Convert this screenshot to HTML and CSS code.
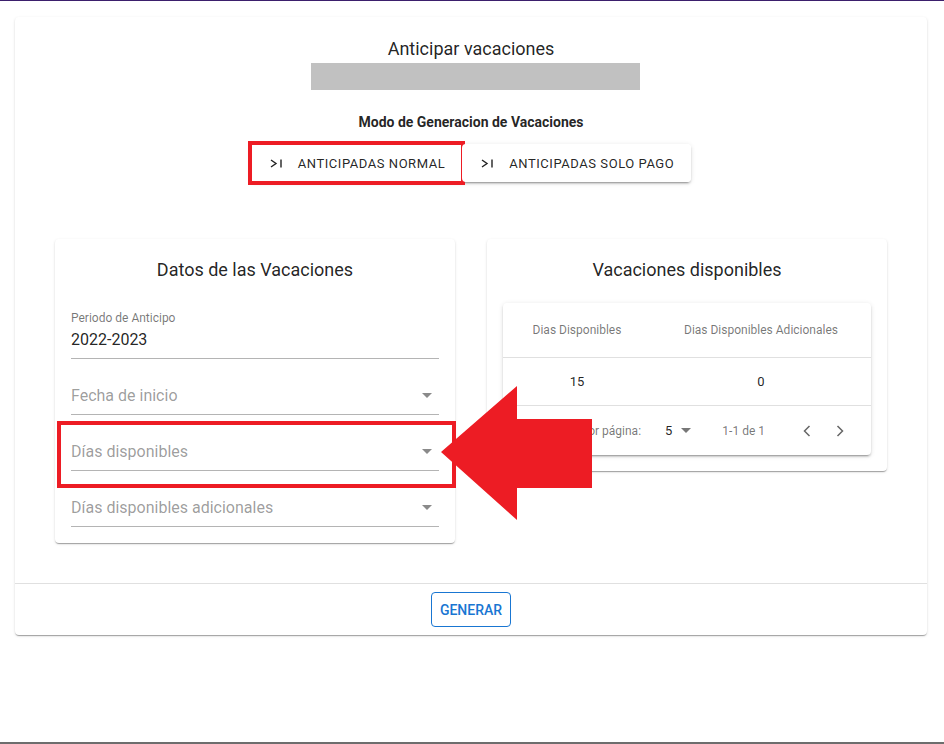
FILE: index.html
```html
<!DOCTYPE html>
<html lang="es">
  <head>
    <meta charset="UTF-8" />
    <meta name="viewport" content="width=device-width, initial-scale=1.0" />
    <title>Anticipar vacaciones</title>
    <link rel="stylesheet" href="styles.css">
  </head>
  <body>
    <div class="page">
      <div class="card">
        <h2 class="title">Anticipar vacaciones</h2>
        <div class="name-bar"></div>

        <h4 class="mode-title">Modo de Generacion de Vacaciones</h4>
        <div class="toggle-group">
          <button class="toggle marked">
            <svg class="last-icon" width="13" height="9" viewBox="0 0 13 9"><polyline points="1,1 6,4.5 1,8" fill="none" stroke="#222" stroke-width="1.4"/><line x1="11" y1="0.5" x2="11" y2="8.5" stroke="#222" stroke-width="1.4"/></svg>
            Anticipadas normal
          </button>
          <button class="toggle">
            <svg class="last-icon" width="13" height="9" viewBox="0 0 13 9"><polyline points="1,1 6,4.5 1,8" fill="none" stroke="#222" stroke-width="1.4"/><line x1="11" y1="0.5" x2="11" y2="8.5" stroke="#222" stroke-width="1.4"/></svg>
            Anticipadas solo pago
          </button>
        </div>

        <div class="panels">
          <div class="panel">
            <h3 class="panel-title">Datos de las Vacaciones</h3>
            <div class="fields">
              <div class="field">
                <div class="field-label">Periodo de Anticipo</div>
                <div class="field-input">2022-2023</div>
              </div>
              <div class="field empty">
                <div class="field-input placeholder">Fecha de inicio
                  <svg class="drop" width="10" height="5" viewBox="0 0 10 5"><path d="M0 0l5 5 5-5z" fill="#8a8a8a"/></svg>
                </div>
              </div>
              <div class="field empty">
                <div class="field-input placeholder">Días disponibles
                  <svg class="drop" width="10" height="5" viewBox="0 0 10 5"><path d="M0 0l5 5 5-5z" fill="#8a8a8a"/></svg>
                </div>
              </div>
              <div class="field empty">
                <div class="field-input placeholder">Días disponibles adicionales
                  <svg class="drop" width="10" height="5" viewBox="0 0 10 5"><path d="M0 0l5 5 5-5z" fill="#8a8a8a"/></svg>
                </div>
              </div>
            </div>
            <div class="mark-box"></div>
          </div>

          <div class="panel">
            <h3 class="panel-title">Vacaciones disponibles</h3>
            <div class="table-card">
              <div class="row head">
                <div>Dias Disponibles</div>
                <div>Dias Disponibles Adicionales</div>
              </div>
              <div class="row body">
                <div>15</div>
                <div>0</div>
              </div>
              <div class="pager">
                <span class="pager-text">Filas por página:</span>
                <span class="pager-select">5
                  <svg width="10" height="5" viewBox="0 0 10 5"><path d="M0 0l5 5 5-5z" fill="#777"/></svg>
                </span>
                <span class="pager-text range">1-1 de 1</span>
                <span class="pager-btn prev">
                  <svg width="8" height="12" viewBox="0 0 8 12"><polyline points="6.5,1 1.5,6 6.5,11" fill="none" stroke="#666" stroke-width="1.5"/></svg>
                </span>
                <span class="pager-btn next">
                  <svg width="8" height="12" viewBox="0 0 8 12"><polyline points="1.5,1 6.5,6 1.5,11" fill="none" stroke="#666" stroke-width="1.5"/></svg>
                </span>
              </div>
            </div>
          </div>
        </div>

        <div class="card-actions">
          <button class="btn-outline">Generar</button>
        </div>
      </div>

      <!-- flecha roja de aviso -->
      <svg class="pointer" width="152" height="135" viewBox="0 0 152 135">
        <polygon points="0,66 76,0 76,33 151,33 151,102 76,102 76,134" fill="#ed1c24"/>
      </svg>
    </div>
  </body>
</html>
```

FILE: styles.css
```css
* {
  box-sizing: border-box;
}
body {
  margin: 0;
  background: #fff;
  font-family: Roboto, "Liberation Sans", sans-serif;
  color: rgba(0, 0, 0, 0.87);
}
.page {
  position: relative;
  height: 744px;
  overflow: hidden;
  border-top: 1px solid #3b1f6c;
  border-bottom: 2px solid #6d6d6d;
  padding: 16px 17px 0 15px;
}
.card {
  background: #fff;
  border-radius: 4px;
  box-shadow: 0 2px 1px -1px rgba(0,0,0,.2), 0 1px 1px 0 rgba(0,0,0,.14), 0 1px 3px 0 rgba(0,0,0,.12);
  padding-top: 18px;
}
.title {
  margin: 0;
  font-size: 18px;
  font-weight: 400;
  line-height: 27px;
  text-align: center;
}
.name-bar {
  width: 329px;
  height: 27px;
  margin: 1px 0 0 296px;
  background: #c1c1c1;
}
.mode-title {
  margin: 22px 0 0;
  font-size: 14px;
  font-weight: 700;
  line-height: 20px;
  text-align: center;
}
.toggle-group {
  display: flex;
  width: max-content;
  margin: 12px auto 0;
  border-radius: 4px;
  box-shadow: 0 3px 1px -2px rgba(0,0,0,.2), 0 2px 2px 0 rgba(0,0,0,.14), 0 1px 5px 0 rgba(0,0,0,.12);
}
.toggle {
  display: flex;
  align-items: center;
  gap: 15px;
  height: 38px;
  padding: 0 17px 0 19px;
  border: none;
  background: #fff;
  font-family: inherit;
  font-size: 13px;
  letter-spacing: 0.55px;
  text-transform: uppercase;
  color: rgba(0, 0, 0, 0.87);
  border-radius: 4px;
}
.toggle.marked {
  outline: 4px solid #ed1c24;
  outline-offset: -1px;
  border-radius: 0;
}
.panels {
  display: flex;
  justify-content: center;
  align-items: flex-start;
  gap: 32px;
  margin: 57px 0 40px;
}
.panel {
  position: relative;
  width: 400px;
  background: #fff;
  border-radius: 4px;
  box-shadow: 0 2px 1px -1px rgba(0,0,0,.2), 0 1px 1px 0 rgba(0,0,0,.14), 0 1px 3px 0 rgba(0,0,0,.12);
  padding: 17px 16px 16px;
}
.panel-title {
  margin: 0;
  font-size: 18px;
  font-weight: 400;
  line-height: 27px;
  text-align: center;
}
.fields {
  margin-top: 20px;
}
.field {
  padding-top: 8px;
}
.field.empty {
  padding-top: 23px;
}
.field-label {
  font-size: 12px;
  line-height: 15px;
  color: rgba(0, 0, 0, 0.54);
}
.field-input {
  display: flex;
  justify-content: space-between;
  align-items: center;
  font-size: 16px;
  line-height: 19px;
  padding: 4px 7px 9px 0;
  border-bottom: 1px solid #b4b4b4;
}
.field-input.placeholder {
  color: rgba(0, 0, 0, 0.4);
}
.mark-box {
  position: absolute;
  left: 2px;
  top: 182px;
  width: 399px;
  height: 67px;
  border: 4px solid #ed1c24;
}
.table-card {
  margin-top: 20px;
  border-radius: 4px;
  background: #fff;
  box-shadow: 0 3px 1px -2px rgba(0,0,0,.2), 0 2px 2px 0 rgba(0,0,0,.14), 0 1px 5px 0 rgba(0,0,0,.12);
}
.row {
  display: grid;
  grid-template-columns: 148px 1fr;
  align-items: center;
  text-align: center;
  border-bottom: 1px solid #e0e0e0;
}
.row.head {
  height: 55px;
  font-size: 12px;
  color: rgba(0, 0, 0, 0.54);
}
.row.body {
  height: 48px;
  font-size: 13px;
}
.pager {
  display: flex;
  justify-content: flex-end;
  align-items: center;
  height: 49px;
  padding-right: 19px;
  font-size: 12px;
}
.pager-text {
  color: rgba(0, 0, 0, 0.54);
}
.pager-select {
  display: flex;
  align-items: center;
  gap: 9px;
  margin-left: 24px;
  font-size: 13px;
}
.range {
  margin-left: 31px;
}
.pager-btn {
  display: flex;
  justify-content: center;
  width: 24px;
}
.pager-btn.prev {
  margin-left: 30px;
}
.pager-btn.next {
  margin-left: 9px;
}
.card-actions {
  display: flex;
  justify-content: center;
  border-top: 1px solid #e0e0e0;
  padding: 8px 0;
}
.btn-outline {
  width: 80px;
  height: 35px;
  border: 1px solid #1976d2;
  border-radius: 4px;
  background: #fff;
  color: #1976d2;
  font-family: inherit;
  font-size: 14px;
  font-weight: 500;
  text-transform: uppercase;
}
.pointer {
  position: absolute;
  left: 441px;
  top: 385px;
}
```
